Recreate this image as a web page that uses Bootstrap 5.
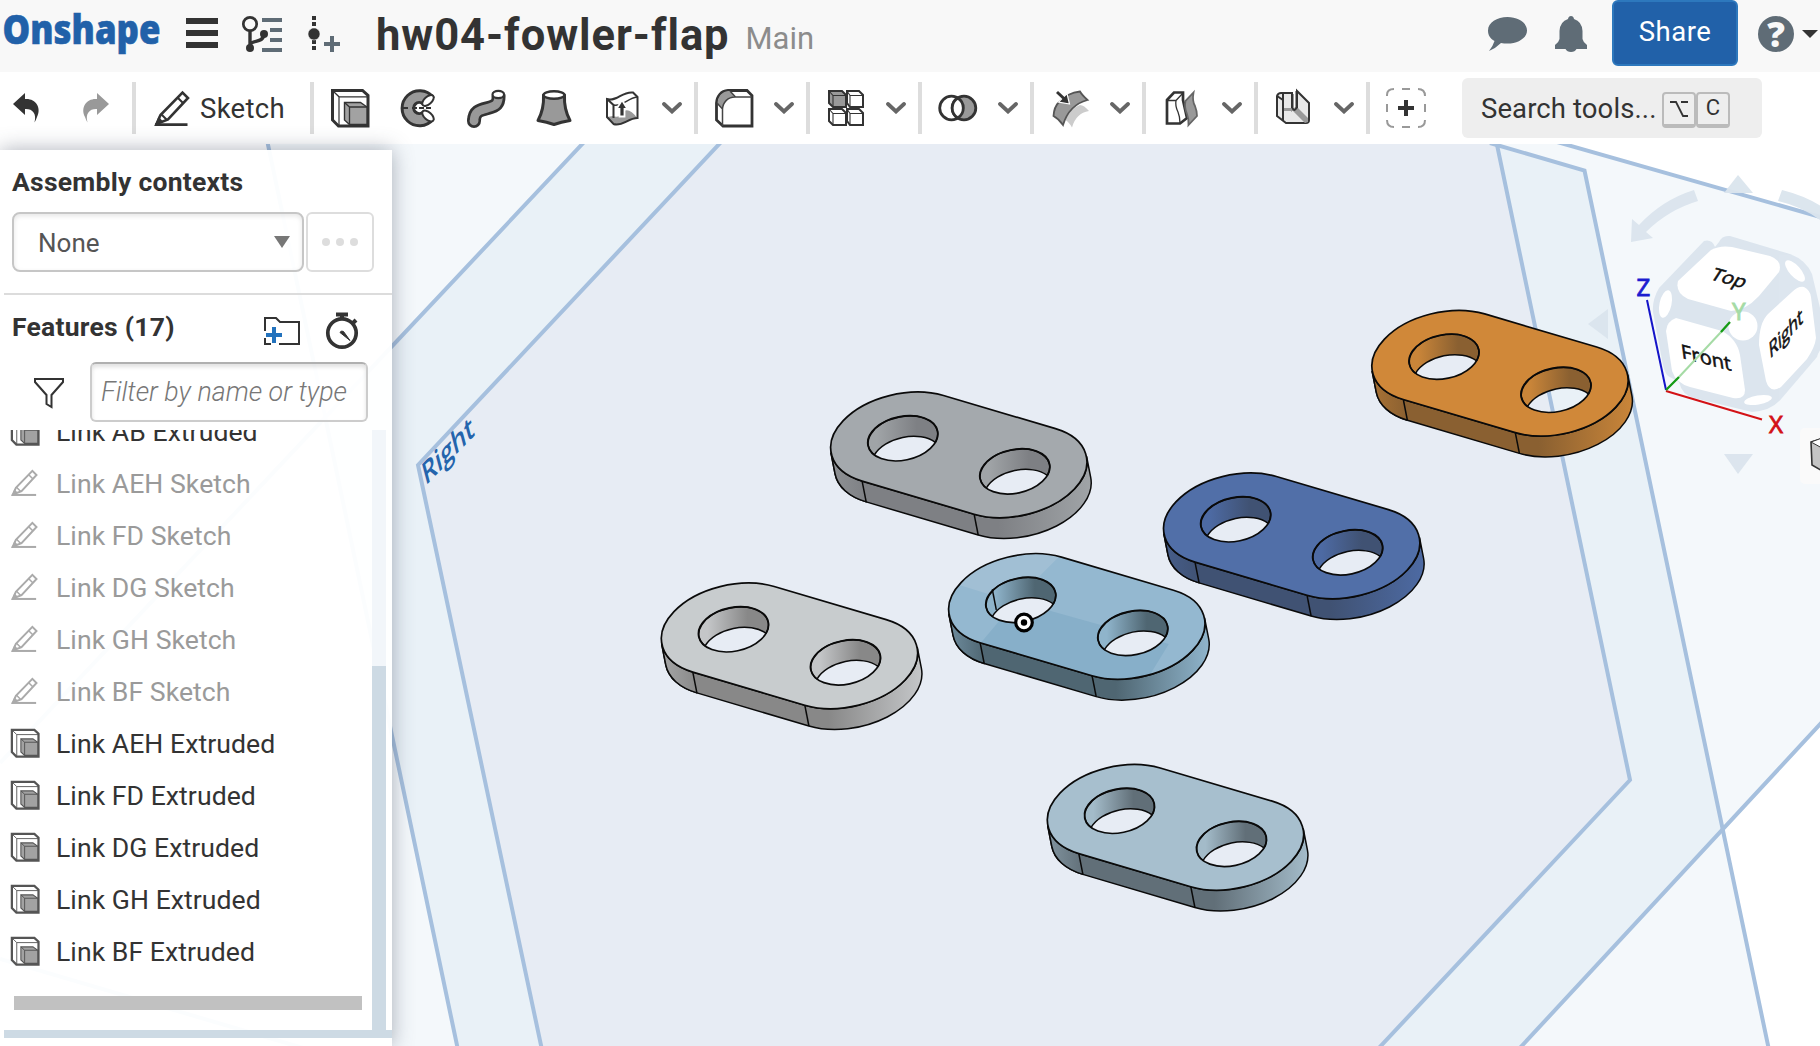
<!DOCTYPE html>
<html lang="en">
<head>
<meta charset="utf-8">
<title>hw04-fowler-flap | Main</title>
<link href="https://cdn.jsdelivr.net/npm/bootstrap@5.3.0/dist/css/bootstrap.min.css" rel="stylesheet">
<style>
body{font-family:Roboto,"Liberation Sans",sans-serif;color:#333;font-size:26px;line-height:1.2;overflow:hidden;width:1820px;height:1046px;background:#fff}
svg{display:block;flex:none}
.topbar{height:72px;background:#f8f8f8}
.logo{overflow:visible;margin-right:20px}
.doc-title{font-size:43.5px;font-weight:700;line-height:72px;letter-spacing:.95px;margin-left:34px;white-space:nowrap}
.doc-branch{font-size:31px;color:#8c8c8c;line-height:72px;margin-left:16px;padding-top:5px}
.share-btn{width:126px;height:66px;background:#2161a9;border:2px solid #2d78bd;border-radius:6px;color:#fff;font-size:27.5px;letter-spacing:.5px;padding:0 0 2px;margin-left:24px}
.help{margin-left:18px}
.tools{height:72px;background:#fff}
.vsep{width:4px;height:52px;background:#ddd;flex:none}
.chev{margin:0 12px 0 20px}
.ic{margin-left:16px}
.ic + .ic{margin-left:28px}
.sk-label{font-size:27.5px;letter-spacing:.3px;width:98px;margin-left:10px;margin-right:12px;white-space:nowrap}
.finder{margin-left:36px;width:300px;height:60px;background:#eee;border-radius:6px;padding-left:19px;font-size:27.5px;letter-spacing:.1px;white-space:nowrap}
.keycap{width:34px;height:36px;border:2px solid #bbb;border-bottom-width:4px;border-radius:4px;font-size:22px;margin-top:3px}
.stage{height:902px}
.side{position:absolute;left:0;top:6px;width:392px;height:896px;background:rgba(255,255,255,.955);box-shadow:0 0 20px rgba(60,70,90,.42)}
.hd{font-weight:700;font-size:26.5px;letter-spacing:.25px}
.pick{width:292px;height:60px;border:2px solid #c6c6c6;border-radius:8px;background:rgba(255,255,255,.6);box-shadow:inset 0 2px 5px rgba(0,0,0,.1);padding:0 12px 0 24px;color:#555}
.pick span{padding-top:3px}
.more{width:68px;height:60px;border:2px solid #ddd;border-radius:6px;gap:6px}
.more i{width:8px;height:8px;border-radius:50%;background:#ddd}
.rule{height:2px;background:#dcdcdc;margin-left:4px}
.filt{width:278px;height:60px;border:2px solid #ccc;border-top-color:#b0b0b0;border-radius:6px;box-shadow:inset 0 3px 4px rgba(0,0,0,.12);font-style:italic;font-weight:300;color:#777;padding:1px 0 0 9px;font-size:26.8px;white-space:nowrap;background:rgba(255,255,255,.6)}
.list{height:600px;overflow:hidden}
.feats{margin-top:-24px}
.feat{height:52px;padding-left:10px;white-space:nowrap;gap:16px;font-size:26.6px;letter-spacing:.05px}
.feat svg{margin-bottom:2px}
.feat.off{color:#9a9a9a}
.track{width:14px;background:#f2f6fa;margin-right:6px}
.thumb{margin-top:236px;height:364px;background:#cddae4}
.hbar{width:348px;height:14px;background:#c1c1c1;margin:18px 0 0 14px}
.foot{height:8px;background:#cddae4;margin-left:4px}
</style>
<script src="https://cdn.jsdelivr.net/npm/bootstrap@5.3.0/dist/js/bootstrap.bundle.min.js"></script>
</head>
<body>
<svg width="0" height="0" class="position-absolute">
 <defs>
  <symbol id="pencil" viewBox="0 0 36 36"><g fill="none" stroke="currentColor" stroke-width="2.6"><path d="M2.5 34 6.5 25 28.5 2.5 34 8 14 29.5Z"/><path d="M24 8l5 5M7 24l6 6" stroke-width="2"/></g><path d="M1 35.5 4.5 26.500 9 31.500Z" fill="currentColor"/><path d="M1 34.600H33.500" stroke="currentColor" stroke-width="2.700"/></symbol>
  <symbol id="solid" viewBox="0 0 40 40"><path d="M2.500 2.500H32.500L38 7.500V38H8.500L2.500 32Z" fill="#fff" stroke="currentColor" stroke-width="3"/><path d="M3 3 9 8.800H38M9 8.800V38" fill="none" stroke="currentColor" stroke-width="1.200"/><path d="M14.500 14.500H30.500L37 19V36.500H19.500L14.500 32Z" fill="#a2a2a2" stroke="currentColor" stroke-width="1.400"/><path d="M14.500 14.500 19.500 19H37M19.500 19V36.500" fill="none" stroke="currentColor" stroke-width="1.300"/></symbol>
  <symbol id="chev" viewBox="0 0 20 12"><path d="M2 2 10 9.500 18 2" fill="none" stroke="#666" stroke-width="3.800" stroke-linecap="round"/></symbol>
 </defs>
</svg>

<header class="topbar d-flex align-items-center">
 <svg class="logo" width="164" height="72"><text x="2.500" y="43.500" font-family="Open Sans" font-weight="800" font-size="41" fill="#2161a9" stroke="#2161a9" stroke-width=".6" textLength="158" lengthAdjust="spacingAndGlyphs">Onshape</text></svg>
 <svg width="36" height="72" viewBox="184 0 36 72"><path d="M186 21H218M186 33H218M186 45H218" stroke="#333" stroke-width="6"/></svg>
 <svg width="46" height="72" viewBox="240 0 46 72" style="margin-left:20px"><g fill="none"><path d="M262 20H282M270 30H282M270 40H282M262 50H282" stroke="#5f6c76" stroke-width="4"/><circle cx="250" cy="24" r="6.700" stroke="#333" stroke-width="2.700"/><path d="M250 31V48M250 45C252 39 263 44 264 34" stroke="#333" stroke-width="3.400"/></g><circle cx="250" cy="48" r="4" fill="#333"/><circle cx="264" cy="34" r="4" fill="#333"/></svg>
 <svg width="36" height="72" viewBox="306 0 36 72" style="margin-left:20px"><path d="M314 16V52" stroke="#333" stroke-width="4" stroke-dasharray="4 2"/><circle cx="314" cy="34" r="6" fill="#333" stroke="#f8f8f8" stroke-width=".5"/><path d="M324 44H340M332 36V52" stroke="#5f6c76" stroke-width="4"/></svg>
 <div class="doc-title">hw04-fowler-flap</div>
 <div class="doc-branch">Main</div>
 <svg class="ms-auto" width="44" height="72" viewBox="1487 0 44 72"><path d="M1508.500 17C1519 17 1528 22.500 1528 30.500C1528 38 1519 43.500 1508.500 43.500Q1505 43.500 1502 43Q1497 48 1490 51Q1494 46 1495.500 41C1491 38.500 1489 35 1489 30.500C1489 22.500 1498 17 1508.500 17Z" fill="#5f6c76"/></svg>
 <svg width="34" height="72" viewBox="1555 0 34 72" style="margin-left:24px"><path d="M1572 16Q1574.500 16 1575 19Q1583 21.500 1583.500 31V39Q1584 42 1588 45V49H1577.500Q1576 52 1572 52Q1568 52 1566.500 49H1556V45Q1560 42 1560.500 39V31Q1561 21.500 1569 19Q1569.500 16 1572 16Z" fill="#5f6c76"/></svg>
 <button class="btn share-btn align-self-start">Share</button>
 <svg class="help" width="64" height="72" viewBox="1756 0 64 72"><circle cx="1776" cy="34" r="18" fill="#5f6c76"/><text x="1776" y="47" text-anchor="middle" font-family="Open Sans" font-weight="800" font-size="35" fill="#f8f8f8">?</text><path d="M1802 30H1818L1810 38Z" fill="#333"/></svg>
</header>

<nav class="tools d-flex align-items-center">
 <svg width="132" height="40" viewBox="0 88 132 40"><path d="M13 104 25 93V99C35 98 42 107 37 117Q36 120 34.500 122.500C37 113 32 108.500 25 109V115Z" fill="#333"/><path d="M109 104 97 93V99C87 98 80 107 85 117Q86 120 87.500 122.500C85 113 90 108.500 97 109V115Z" fill="#999"/></svg>
 <div class="vsep"></div>
 <svg width="36" height="36" style="margin-left:18px"><use href="#pencil"/></svg>
 <div class="sk-label">Sketch</div>
 <div class="vsep"></div>
 <svg class="ic" width="40" height="40"><use href="#solid"/></svg>
 <svg class="ic" width="40" height="40"><path d="M35 9A17.500 17.500 0 1 0 35 31.500L25 24A5.500 5.500 0 1 1 25 16Z" fill="#999" stroke="#333" stroke-width="3" stroke-linejoin="round"/><ellipse cx="30" cy="12.500" rx="7" ry="3.700" transform="rotate(-42 30 12.500)" fill="#fff" stroke="#333" stroke-width="2"/><ellipse cx="30" cy="28" rx="7" ry="3.700" transform="rotate(42 30 28)" fill="#fff" stroke="#333" stroke-width="2"/><path d="M5 20H10M14 20H34" stroke="#333" stroke-width="2" stroke-dasharray="5 2"/></svg>
 <svg class="ic" width="40" height="40"><path d="M32.500 7C33 16 30 18 22 20S8 23 8 33" fill="none" stroke="#333" stroke-width="14"/><circle cx="8" cy="33" r="7" fill="#333"/><path d="M32.500 6C33 16 30 18 22 20S8 23 8 33.500" fill="none" stroke="#999" stroke-width="8.500"/><circle cx="8" cy="33" r="4.300" fill="#999"/><ellipse cx="32.300" cy="6.500" rx="5.800" ry="3.600" fill="#fff" stroke="#333" stroke-width="2.200"/></svg>
 <svg class="ic" width="40" height="40"><path d="M9.500 7C10 17 7.500 26 4 32.500Q13 34 20 36.500Q27 34 36 32.500C32.500 26 30 17 30.500 7Z" fill="#999" stroke="#333" stroke-width="3" stroke-linejoin="round"/><ellipse cx="20" cy="7" rx="10.500" ry="3.800" fill="#fff" stroke="#333" stroke-width="2.500"/></svg>
 <svg class="ic" width="40" height="40"><path d="M11 28Q17 31 22 23Q28 20 35 30Q26 31 20 36Q12 39 5 29Z" fill="#999"/><path d="M5 11C15 14 20 3 31 4.500L35.500 9V30C26 30 20 39 11.500 36L5 29ZM5 11 11.500 17V30" fill="none" stroke="#333" stroke-width="2"/><path d="M11.500 17C20 19 26 10 35 9" fill="none" stroke="#333" stroke-width="1.400"/><path d="M20 12 25.500 21H22.500V28.500H17.500V21H14.500Z" fill="#333" stroke="#fff" stroke-width="1.800"/></svg>
 <svg class="chev" width="20" height="12"><use href="#chev"/></svg>
 <div class="vsep"></div>
 <svg class="ic" width="40" height="40"><path d="M14 2.500H33L38 7.500V38H9L2.500 32V15C3 8 7 3 14 2.500Z" fill="#fff" stroke="#333" stroke-width="2.800"/><path d="M14 3H16L21 8.500C14 9 9 14 8.500 20L3.500 15.500C4 8 8 4 14 3Z" fill="#999"/><path d="M38 9H21C14 9 9 14 8.500 21V38M3 15 8.500 21M16 3 21.500 9" fill="none" stroke="#444" stroke-width="1.500"/></svg>
 <svg class="chev" width="20" height="12"><use href="#chev"/></svg>
 <div class="vsep"></div>
 <svg class="ic" width="40" height="40"><g fill="#fff" stroke="#333" stroke-width="2"><path d="M3 3H16L20 7V19H7L3 15Z" fill="#999"/><path d="M21 3H33L37 7V19H24L21 15Z"/><path d="M3 21H16L20 25V37H7L3 33Z"/><path d="M21 21H33L37 25V37H24L21 33Z"/></g><path d="M3 3 7 7.500H19M7 7.500V19M21 3 24 7.500H36M24 7.500V19M3 21 7 25.500H19M7 25.500V37M21 21 24 25.500H36M24 25.500V37" fill="none" stroke="#333" stroke-width="1.100"/></svg>
 <svg class="chev" width="20" height="12"><use href="#chev"/></svg>
 <div class="vsep"></div>
 <svg class="ic" width="40" height="40"><g stroke="#333" stroke-width="2.800"><circle cx="13.500" cy="20" r="11.800" fill="#fff"/><circle cx="26" cy="20" r="11.800" fill="#999"/></g><path d="M19.750 9.990A11.800 11.800 0 0 1 19.750 30.010A11.800 11.800 0 0 1 19.750 9.990Z" fill="#fff" stroke="#333" stroke-width="2.800"/></svg>
 <svg class="chev" width="20" height="12"><use href="#chev"/></svg>
 <div class="vsep"></div>
 <svg class="ic" width="40" height="40"><path d="M39 23Q34 17 30 17Q19 21 15.500 32Q19 34 22 39.500Q26 25 39 23Z" fill="#ccc"/><path d="M18 7Q24 4 30 3.500Q32 7 37.500 12Q19 17 13 37Q9 31 3.500 28Q4 19 9 14Z" fill="#999" stroke="#555" stroke-width="1.800"/><path d="M7 4 16 12.500" stroke="#fff" stroke-width="6"/><path d="M19.500 16 8.500 14 17 5.500Z" fill="#333" stroke="#fff" stroke-width="1.200"/><path d="M7 4 15 11.500" stroke="#333" stroke-width="3"/></svg>
 <svg class="chev" width="20" height="12"><use href="#chev"/></svg>
 <div class="vsep"></div>
 <svg class="ic" width="40" height="40"><path d="M5 12 12 4.500H21V12L25 30 18 35.500H5Z" fill="#fff" stroke="#333" stroke-width="2.700"/><path d="M5 12.500H14Q13 18 16 24Q18 29 18 35M14 12.500 21 5" fill="none" stroke="#333" stroke-width="1.300"/><path d="M31.500 4.500Q30 13 33 18Q35 23 35 28L26.500 37Q27 31 25 26Q22 19 23.500 13Z" fill="#999" stroke="#666" stroke-width="1.800"/></svg>
 <svg class="chev" width="20" height="12"><use href="#chev"/></svg>
 <div class="vsep"></div>
 <svg class="ic" width="40" height="40"><path d="M3 8Q4 5 7 5H18V22L23 20V3L35 15V32Q35 35 32 35H12L3 28Z" fill="#e8e8e8" stroke="#333" stroke-width="2"/><path d="M9 20H19L24 20 34 30V34L31 35 19 23H9Z" fill="#999"/><path d="M3 8 9 12V33M9 12V5.500M18.500 6V20Q20 24 22.500 20V3" fill="none" stroke="#333" stroke-width="2"/></svg>
 <svg class="chev" width="20" height="12"><use href="#chev"/></svg>
 <div class="vsep"></div>
 <svg class="ic" width="40" height="40"><path d="M1 8V7Q1 1 8 1M16 1H24M32 1Q39 1 39 8M39 16V24M39 32Q39 39 32 39M24 39H16M8 39Q1 39 1 32M1 24V16" fill="none" stroke="#999" stroke-width="2"/><path d="M12 20H28M20 12V28" stroke="#333" stroke-width="4"/></svg>
 <div class="finder d-flex align-items-center"><span style="width:181px">Search tools...</span><span class="keycap d-flex align-items-center justify-content-center"><svg width="20" height="18"><path d="M1 2H7L14 16H19M12 2H19" fill="none" stroke="#333" stroke-width="1.800"/></svg></span><span class="keycap d-flex align-items-center justify-content-center">C</span></div>
</nav>

<main class="stage position-relative">
 <svg width="1820" height="902" viewBox="0 144 1820 902" id="scene">
  <g fill="rgba(10,100,165,.044)">
   <path d="M267 144 457 1046H1768L1584 170 1497 144Z"/>
   <path d="M583 144 0 764V959L300 1046H1522L1820 725V218L1562 144Z"/>
  </g>
  <path d="M719 144 418 465 541 1046H1381L1630 780 1497 144Z" fill="#e7ecf4"/>
  <g fill="none" stroke="#a6c0de" stroke-width="4">
   <path d="M267 140 458 1050M1769 1050 1584.500 170.500 1490 143"/>
   <path d="M586 140 0 763M0 959 310 1050M1518 1050 1824 720M1550 140 1824 218"/>
   <path d="M723 140 418 465 542 1050M1377 1050 1630 780 1496 140"/>
  </g>
  <text transform="matrix(.7 -.72 .26 .98 425.500 486)" font-family="Open Sans" font-weight="600" font-size="28.500" fill="#2464ac">Right</text>
  <g id="links"></g>
  <g fill="#dbe5ee" opacity=".95">
   <path d="M1724 193 1738 175 1753 193ZM1724 454H1753L1738 474ZM1588 324 1608 309V339Z"/>
   <path d="M1694 190 1698 201Q1668 210 1646 232L1653 238 1631 242 1632 219 1639 225Q1662 200 1694 190ZM1782 190 1778 201Q1804 207 1824 223V208Q1806 196 1782 190Z"/>
   <path d="M1704 241Q1712 239 1715 247L1719 242Q1722 235 1730 236L1790 254Q1806 260 1812 274L1824 325V345Q1818 352 1817 357L1782 398Q1772 411 1752 412L1694 398Q1682 395 1679 382L1668 376Q1664 372 1662 360L1653 312Q1652 300 1659 288Z"/>
  </g>
  <g fill="#fff">
   <path d="M1711 250Q1720 245 1732 247L1770 256Q1783 261 1779 272L1759 296Q1745 311 1731 311L1688 299Q1675 293 1678 281Z"/>
   <path d="M1676 318Q1667 321 1666 331L1672 371Q1676 383 1690 387L1733 398Q1745 400 1745 390L1740 355Q1737 339 1722 331Z"/>
   <path d="M1804 287Q1810 290 1811 297L1816 338Q1815 347 1807 359L1781 387Q1770 394 1766 381L1759 345Q1759 323 1768 314L1792 292Q1798 286 1804 287Z"/>
   <circle cx="1743" cy="326" r="14.500"/>
   <ellipse cx="1665.500" cy="304" rx="6" ry="14" transform="rotate(12 1665.500 304)"/>
   <ellipse cx="1795" cy="271" rx="5.500" ry="13.500" transform="rotate(-42 1795 271)"/>
   <ellipse cx="1758" cy="400" rx="14" ry="4.500" transform="rotate(-10 1758 400)"/>
  </g>
  <g font-family="Open Sans" fill="#111" font-size="20" stroke="#111" stroke-width=".6">
   <text transform="matrix(.96 .26 -.5 .78 1709 279)">Top</text>
   <text transform="matrix(1 .26 .13 .98 1682 358)">Front</text>
   <text transform="matrix(.7 -.78 .12 1.050 1770 359)">Right</text>
  </g>
  <g stroke-width="2" fill="none">
   <path d="M1666 390 1647 300" stroke="#1414c8"/><path d="M1666 391 1762 419.500" stroke="#d31216"/>
   <path d="M1679 377 1722 331" stroke="#a5dba5"/><path d="M1666 390 1679 377M1721 332 1730 322" stroke="#159b15" stroke-width="2.300"/>
  </g>
  <g font-family="Noto Sans, Open Sans" font-size="24" stroke-width=".8">
   <text x="1636.500" y="295.500" fill="#1c1cd0" stroke="#1c1cd0">Z</text><text x="1769" y="432.500" fill="#d31216" stroke="#d31216">X</text><text x="1732" y="320" fill="#a5dba5" stroke="#a5dba5">Y</text>
  </g>
  <rect x="1800" y="428" width="30" height="56" rx="5" fill="#fafafa"/>
  <path d="M1811 442 1824 438V472L1812 465Z" fill="#c4c4c4" stroke="#333" stroke-width="1.600"/><path d="M1811 442 1822 438V448Z" fill="#fff" stroke="#333"/>
 </svg>

 <aside class="side d-flex flex-column">
  <div class="hd" style="margin:16px 0 15px 12px;height:31px">Assembly contexts</div>
  <div class="d-flex" style="margin-left:12px;gap:2px">
   <div class="pick d-flex align-items-center justify-content-between"><span>None</span><svg width="16" height="12"><path d="M0 0H16L8 12Z" fill="#777"/></svg></div>
   <div class="more d-flex align-items-center justify-content-center"><i></i><i></i><i></i></div>
  </div>
  <div class="rule" style="margin-top:21px"></div>
  <div class="d-flex" style="height:67px;padding-left:12px">
   <div class="hd" style="padding-top:16px;width:252px">Features (17)</div>
   <svg width="38" height="30" viewBox="264 317 38 30" style="margin-top:21px"><path d="M265 332V319H276L280 323H299V345H279M271 345H265V339" fill="none" stroke="#333" stroke-width="2"/><path d="M266 336H282M274 328V344" stroke="#2272bd" stroke-width="4"/></svg>
   <svg width="36" height="38" viewBox="324 313 36 38" style="margin-left:22px;margin-top:17px"><circle cx="342" cy="334" r="14.200" fill="none" stroke="#333" stroke-width="3.700"/><path d="M336 315.500H348M342 315V321M352 325 356 321" stroke="#333" stroke-width="4"/><path d="M340 333.500Q341 331 343.500 332.500L350 341.500Z" fill="#333" stroke="#333"/></svg>
  </div>
  <div class="d-flex">
   <svg width="90" height="60" viewBox="0 362 90 60"><path d="M35 379H63V382L51.500 395V407L46.500 404V395L35 382Z" fill="none" stroke="#333" stroke-width="2"/></svg>
   <div class="filt d-flex align-items-center">Filter by name or type</div>
  </div>
  <div class="list d-flex justify-content-between" style="margin-top:8px">
   <div>
    <div class="feats" id="feats"></div>
    <div class="hbar"></div>
   </div>
   <div class="track"><div class="thumb"></div></div>
  </div>
  <div class="foot"></div>
 </aside>
</main>
<script>
// feature tree: name and whether it is a (hidden) sketch
const rows=[["Link AB Extruded",0],["Link AEH Sketch",1],["Link FD Sketch",1],["Link DG Sketch",1],["Link GH Sketch",1],["Link BF Sketch",1],["Link AEH Extruded",0],["Link FD Extruded",0],["Link DG Extruded",0],["Link GH Extruded",0],["Link BF Extruded",0]];
document.getElementById("feats").innerHTML=rows.map(([n,s])=>`<div class="feat d-flex align-items-center ${s?"off":""}"><svg width="30" height="30" style="color:${s?"#aaa":"#555"}"><use href="#${s?"pencil":"solid"}" ${s?'x="1" width="27" height="27" y="1"':'width="30" height="30"'}/></svg><span>${n}</span></div>`).join("");

// each link: centre of first hole, top, light side, dark side
const parts=[[902.8,438.3,"#a4a9ad","#a0a4a7","#7e8084"],[733.5,629.3,"#c8ccce","#c4c6c8","#888"],[1235.7,519.3,"#516fa8","#4d6aa3","#405273"],[1020.8,599.9,"#94b8d0","#8fb4cb","#4f6672"],[1119.5,810.8,"#a7bfce","#a3bbc9","#616f78"],[1444,356.7,"#d08839","#c98539","#8a6031"]];
const O="73.300 44.700 -12",H="35.300 21.700 -12";
const hole=(x,y)=>`M${x-34.8} ${y+7.2}A${H} 1 1 ${x+34.8} ${y-7.2}A${H} 1 1 ${x-34.8} ${y+7.2}Z`;
document.getElementById("links").innerHTML=parts.map(([x,y,t,l,d],i)=>{
 const outline="M-40.700 42.800A"+O+" 0 1 40.700 -42.800L152.700 -9.700A"+O+" 0 1 71.300 75.900Z";
 const wall=`M-28.400 16.600A${H} 1 1 32.500 4.050A${H} 0 0 -28.400 16.600Z`;
 return `<defs><linearGradient id="s${i}" gradientUnits="userSpaceOnUse" x1="95" x2="188" y1="0" y2="0"><stop stop-color="${d}"/><stop offset="1" stop-color="${l}"/></linearGradient><linearGradient id="h${i}" gradientUnits="userSpaceOnUse" x1="-36" x2="14" y1="0" y2="0"><stop stop-color="${l}"/><stop offset=".2" stop-color="${l}"/><stop offset="1" stop-color="${d}"/></linearGradient><linearGradient id="e${i}" gradientUnits="userSpaceOnUse" x1="-110" x2="-36" y1="0" y2="0"><stop stop-color="${l}" /><stop offset="1" stop-color="${d}"/></linearGradient><clipPath id="c${i}"><path clip-rule="evenodd" d="${outline}${hole(0,0)}${hole(112,33.1)}"/></clipPath></defs>
 <g transform="translate(${x} ${y})" stroke="#0a0a0a" stroke-width="1.500" stroke-linejoin="round">
 <path fill="url(#s${i})" d="M-71.800 14.900L-67.700 35.700A${O} 0 0 -36.600 63.600L75.400 96.700A${O} 0 0 187.900 39L183.800 18.200A${O} 0 1 71.300 75.900L-40.700 42.800A${O} 0 1 -71.800 14.900Z"/>
 <path fill="url(#e${i})" d="M-71.800 14.900L-67.700 35.700A${O} 0 0 -36.600 63.600L-40.700 42.800A${O} 0 1 -71.800 14.900Z"/>
 <path fill="none" d="M71.300 75.900L75.400 96.700"/>
 <g clip-path="url(#c${i})" stroke="none"><rect x="-80" y="-60" width="280" height="150" fill="${t}"/>${i==3?'<path fill="#a1bfd4" d="M45 -50 -13 8 -80 -19V-60Z"/><path fill="#94b8d0" d="M-60 -14.500 -13 0V40H-80V-22Z"/><path fill="#87afc9" d="M-3 -1 30 11 148 44 120 90H-80L-41 44Z"/>':""}</g>
 <path fill="none" d="${outline}" stroke-width="1.700"/>
 <path fill="url(#h${i})" d="${wall}"/>
 <path transform="translate(112 33.100)" fill="url(#h${i})" d="${wall}"/>
 <path fill="none" stroke-width="1.700" d="${hole(0,0)}${hole(112,33.1)}"/>
 ${i==3?'<path d="M-28.500 -10.500L-24.500 10" fill="none"/>':""}
 </g>`}).join("")
 +'<g><circle cx="1024" cy="622.500" r="8.300" fill="#fff" stroke="#000" stroke-width="3.200"/><circle cx="1024" cy="622.500" r="3.200"/></g>';
</script>
</body>
</html>
